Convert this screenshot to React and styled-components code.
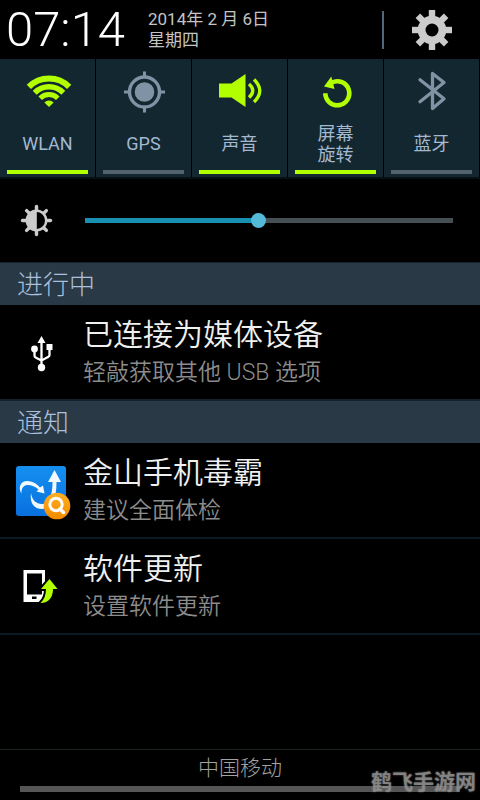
import React, { useState } from "react";
import styled, { createGlobalStyle } from "styled-components";

const LIME = "#b2ff00";
const STEEL = "#8093a5";

const GlobalStyle = createGlobalStyle`
  *, *::before, *::after { box-sizing: border-box; }
  body {
    margin: 0;
    background: #000;
    font-family: Roboto, "Noto Sans CJK SC", sans-serif;
    font-weight: 350;
  }
  button { font: inherit; color: inherit; background: none; border: 0; padding: 0; cursor: pointer; }
  svg { display: block; flex: none; }
`;

const Panel = styled.main`
  position: relative;
  display: flex;
  flex-direction: column;
  min-height: 100vh;
  background: #000;
  color: #e8e8e8;
`;

const Header = styled.header`
  display: flex;
  align-items: center;
  height: 59px;
  padding: 0 28px 0 6px;
`;

const Clock = styled.time`
  width: 142px;
  font-size: 49px;
  font-weight: 300;
  line-height: 58px;
  color: #fff;
`;

const DateText = styled.p`
  flex: 1;
  margin: 0;
  padding-top: 1px;
  font-size: 17px;
  font-weight: 400;
  line-height: 21px;
  color: #c4c4c4;
`;

const SettingsButton = styled.button`
  display: flex;
  padding-left: 28px;
  height: 38px;
  align-items: center;
  border-left: 2px solid #52677a;
`;

const Tiles = styled.section`
  display: grid;
  grid-template-columns: repeat(5, 1fr);
  border-bottom: 2px solid #061015;
`;

const TileButton = styled.button`
  display: flex;
  flex-direction: column;
  align-items: center;
  height: 118px;
  padding: 9px 8px 3px 7px;
  background: #132730;
  box-shadow: inset -1px 0 #000;
  color: ${(p) => (p.$on ? LIME : STEEL)};

  &::after {
    content: "";
    width: 100%;
    height: 4px;
    background: ${(p) => (p.$on ? LIME : "#52636e")};
  }
`;

const TileLabel = styled.span`
  flex: 1;
  display: flex;
  flex-direction: column;
  justify-content: center;
  padding-top: 1px;
  font-size: 18px;
  font-weight: 400;
  line-height: 21px;
  color: #a4b8cf;
`;

const Brightness = styled.label`
  display: flex;
  align-items: center;
  gap: 29px;
  height: 83px;
  padding: 0 27px 0 20px;
`;

const Slider = styled.input`
  flex: 1;
  min-width: 0;
  height: 15px;
  margin: 0;
  appearance: none;
  background: transparent;

  &::-webkit-slider-runnable-track {
    height: 5px;
    background: linear-gradient(to right, #1790b2 var(--fill), #454f54 var(--fill));
  }
  &::-webkit-slider-thumb {
    appearance: none;
    width: 15px;
    height: 15px;
    margin-top: -5px;
    border-radius: 50%;
    background: #55bad8;
  }
`;

const SectionTitle = styled.h2`
  margin: 0;
  padding: 3px 17px 0;
  border-top: ${(p) => (p.$first ? "1px" : "2px")} solid #14222d;
  background: #2a3946;
  color: #abc0dc;
  font-size: 26px;
  font-weight: 300;
  line-height: 39px;
`;

const List = styled.ul`
  margin: 0;
  padding: 0;
  list-style: none;
`;

const Entry = styled.li`
  border-bottom: ${(p) => (p.$plain ? "0" : "2px solid #081a24")};
`;

const EntryButton = styled.button`
  display: flex;
  align-items: center;
  gap: 7px;
  width: 100%;
  height: 94px;
  padding: 0 16px;
  text-align: left;
`;

const EntryText = styled.span`
  display: flex;
  flex-direction: column;
  padding-top: 3px;
  line-height: 38px;
`;

const EntryTitle = styled.span`
  font-size: 30px;
  color: #f0f0f0;
`;

const EntryDetail = styled.span`
  font-size: 23px;
  color: #8c8c8c;
`;

const Footer = styled.footer`
  margin-top: auto;
  height: 51px;
  padding: 0 20px;
  border-top: 1px solid #1c2327;
  text-align: center;
  font-size: 21px;
  font-weight: 300;
  line-height: 36px;
  color: #a2a2a2;

  &::after {
    content: "";
    display: block;
    height: 6px;
    background: #555;
  }
`;

const Watermark = styled.span`
  position: absolute;
  right: 4px;
  bottom: 4px;
  font-size: 21px;
  font-weight: 700;
  line-height: 28px;
  color: rgba(140, 140, 140, 0.85);
  text-shadow: 0 0 2px rgba(170, 170, 170, 0.6);
`;

const GearIcon = () => (
  <svg width="40" height="40" viewBox="-20 -20 40 40" aria-hidden="true">
    <g fill="#cbcbcb">
      {[0, 45, 90, 135].map((a) => (
        <rect key={a} x="-3.2" y="-20" width="6.4" height="40" transform={`rotate(${a})`} />
      ))}
      <circle r="14.3" />
    </g>
    <circle r="6.5" fill="#000" />
  </svg>
);

const TileIcon = ({ children }) => (
  <svg width="48" height="48" viewBox="24 68 48 48" aria-hidden="true" fill="none" stroke="currentColor">
    {children}
  </svg>
);

const WifiIcon = () => (
  <TileIcon>
    <path d="M28.85 86.85A28.5 28.5 0 0 1 69.15 86.85" strokeWidth="6" />
    <path d="M34.7 92.7A20.2 20.2 0 0 1 63.3 92.7" strokeWidth="5.5" />
    <path d="M40.2 98.2A12.4 12.4 0 0 1 57.8 98.2" strokeWidth="5" />
    <path d="M49 107L44.4 102.4A6.5 6.5 0 0 1 53.6 102.4Z" fill="currentColor" stroke="none" />
  </TileIcon>
);

const GpsIcon = () => (
  <TileIcon>
    <circle cx="48.5" cy="92" r="15" strokeWidth="3.4" />
    <circle cx="48.5" cy="92" r="9.8" fill="currentColor" stroke="none" />
    <path d="M48.5 71.5v5M48.5 107.5v5M28 92h5M64 92h5" strokeWidth="3" />
  </TileIcon>
);

const SoundIcon = () => (
  <TileIcon>
    <path d="M27 83.5H39.5L53.5 74V107L39.5 97.5H27Z" fill="currentColor" stroke="none" />
    <path d="M57 84Q64.5 90.5 57 97.5" strokeWidth="3.4" />
    <path d="M62 79.5Q73.5 90.5 62 102" strokeWidth="3.4" />
  </TileIcon>
);

const RotateIcon = () => (
  <TileIcon>
    <path d="M37.3 93.3A12 12 0 1 0 44 82.5" strokeWidth="4.6" />
    <path d="M36 86.5L43.3 76.5L46.5 89Z" fill="currentColor" stroke="none" />
  </TileIcon>
);

const BluetoothIcon = () => (
  <TileIcon>
    <path
      d="M36 79.7L60 98.8L48.5 108.5V73.5L60 82.5L36 101.7"
      strokeWidth="3.3"
      strokeLinecap="round"
      strokeLinejoin="round"
    />
  </TileIcon>
);

const BrightnessIcon = () => (
  <svg width="36" height="36" viewBox="-16.5 -17.5 36 36" aria-hidden="true" fill="none" stroke="#ccc">
    {[0, 45, 90, 135, 180, 225, 270, 315].map((a) => (
      <path key={a} d="M0 -10.5V-14" strokeWidth="3.4" strokeLinecap="round" transform={`rotate(${a})`} />
    ))}
    <circle r="9.7" strokeWidth="2.4" />
    <path d="M.3 -9.5A9.5 9.5 0 0 0 .3 9.5Z" fill="#ccc" stroke="none" />
  </svg>
);

const UsbIcon = () => (
  <svg width="60" height="60" viewBox="16 322 60 60" aria-hidden="true" fill="none" stroke="#fff">
    <path d="M41.5 342V367M34.5 349V355.5Q34.5 357 36 357.7L41.5 360.5L48 357Q49.5 356.3 49.5 355V348" strokeWidth="2.3" />
    <g fill="#fff" stroke="none">
      <path d="M41.5 336L45.5 343H37.5Z" />
      <circle cx="34.5" cy="349" r="3.4" />
      <path d="M46.5 344h6v6h-6z" />
      <circle cx="41.5" cy="367.5" r="3.7" />
    </g>
  </svg>
);

const AntivirusIcon = () => (
  <svg width="60" height="60" viewBox="16 460 60 60" aria-hidden="true">
    <defs>
      <linearGradient id="blue" x2="0" y2="1">
        <stop stopColor="#158ff0" />
        <stop offset="1" stopColor="#0870df" />
      </linearGradient>
      <linearGradient id="orange" x2="0" y2="1">
        <stop stopColor="#ffae20" />
        <stop offset="1" stopColor="#f28b00" />
      </linearGradient>
    </defs>
    <rect x="16" y="466" width="50" height="50" rx="3" fill="url(#blue)" />
    <g fill="#f1f8ff">
      <path d="M21.5 493.5C17.5 487 21 480.5 28 481C33 481.3 37 484 40 487.5L43 485.5L44.5 493.5L36.5 491.5L38.5 489.5C32 484 21 482 21.5 493.5Z" />
      <path d="M31 493C29.5 503 34 509 42 509C52 509 56.5 500 56.5 482H61L54.5 470L48 482H52.5C52.5 496 49 504 42 504C36 504 32 500 31 493Z" />
    </g>
    <circle cx="57" cy="506" r="13.3" fill="url(#orange)" />
    <circle cx="56" cy="504.5" r="6.2" fill="none" stroke="#fff" strokeWidth="3" />
    <path d="M60 509L63.5 512.5" stroke="#fff" strokeWidth="3.5" strokeLinecap="round" />
  </svg>
);

const UpdateIcon = () => (
  <svg width="60" height="60" viewBox="16 556 60 60" aria-hidden="true">
    <path fillRule="evenodd" fill="#fff" d="M23.5 570H45V602H23.5ZM27 573.5V594.5H42V573.5ZM32 596.5V599H36.5V596.5Z" />
    <path
      d="M49.5 579L57.5 589H53C53 597 49 603 40.5 603Q46 598 46 589H41Z"
      fill={LIME}
      stroke="#000"
      strokeWidth="4"
      paintOrder="stroke"
    />
  </svg>
);

const tiles = [
  { label: ["WLAN"], on: true, Icon: WifiIcon },
  { label: ["GPS"], on: false, Icon: GpsIcon },
  { label: ["声音"], on: true, Icon: SoundIcon },
  { label: ["屏幕", "旋转"], on: true, Icon: RotateIcon },
  { label: ["蓝牙"], on: false, Icon: BluetoothIcon },
];

function Tile({ label, on, Icon }) {
  const [active, setActive] = useState(on);
  return (
    <TileButton type="button" $on={active} aria-pressed={active} onClick={() => setActive(!active)}>
      <Icon />
      <TileLabel>
        {label.map((line) => (
          <span key={line}>{line}</span>
        ))}
      </TileLabel>
    </TileButton>
  );
}

function Notification({ icon, title, detail, plain }) {
  return (
    <Entry $plain={plain}>
      <EntryButton type="button">
        {icon}
        <EntryText>
          <EntryTitle>{title}</EntryTitle>
          <EntryDetail>{detail}</EntryDetail>
        </EntryText>
      </EntryButton>
    </Entry>
  );
}

export default function App() {
  const [level, setLevel] = useState(47);
  return (
    <>
      <GlobalStyle />
      <Panel lang="zh-CN">
        <Header>
          <Clock>07:14</Clock>
          <DateText>
            2014年 2 月 6日
            <br />
            星期四
          </DateText>
          <SettingsButton type="button" aria-label="设置">
            <GearIcon />
          </SettingsButton>
        </Header>
        <Tiles>
          {tiles.map((tile) => (
            <Tile key={tile.label[0]} {...tile} />
          ))}
        </Tiles>
        <Brightness>
          <BrightnessIcon />
          <Slider
            type="range"
            aria-label="亮度"
            min="0"
            max="100"
            value={level}
            onChange={(e) => setLevel(Number(e.target.value))}
            style={{ "--fill": `${level}%` }}
          />
        </Brightness>
        <SectionTitle $first>进行中</SectionTitle>
        <List>
          <Notification plain icon={<UsbIcon />} title="已连接为媒体设备" detail="轻敲获取其他 USB 选项" />
        </List>
        <SectionTitle>通知</SectionTitle>
        <List>
          <Notification icon={<AntivirusIcon />} title="金山手机毒霸" detail="建议全面体检" />
          <Notification icon={<UpdateIcon />} title="软件更新" detail="设置软件更新" />
        </List>
        <Footer>中国移动</Footer>
        <Watermark>鹤飞手游网</Watermark>
      </Panel>
    </>
  );
}
